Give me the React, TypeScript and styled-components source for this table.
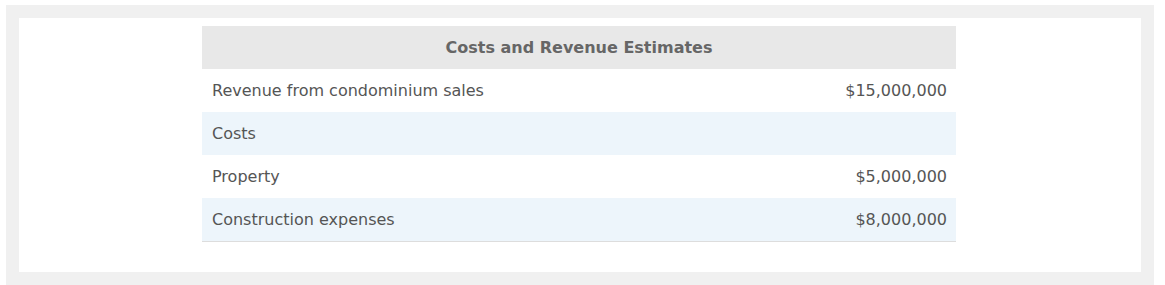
import React from 'react';
import styled, { createGlobalStyle } from 'styled-components';

const GlobalStyle = createGlobalStyle`
  html, body {
    margin: 0;
    padding: 0;
    background: #ffffff;
  }
`;

const rows = [
  { label: 'Revenue from condominium sales', amount: '$15,000,000' },
  { label: 'Costs', amount: '' },
  { label: 'Property', amount: '$5,000,000' },
  { label: 'Construction expenses', amount: '$8,000,000' },
];

function App() {
  return (
    <>
      <GlobalStyle />
      <Frame>
        <Panel>
          <Table>
            <thead>
              <tr>
                <HeadCell colSpan={2}>Costs and Revenue Estimates</HeadCell>
              </tr>
            </thead>
            <tbody>
              {rows.map((row, i) => (
                <Row key={row.label} $striped={i % 2 === 1}>
                  <Cell>{row.label}</Cell>
                  <Cell className='amount'>{row.amount}</Cell>
                </Row>
              ))}
            </tbody>
          </Table>
        </Panel>
      </Frame>
    </>
  );
}

const Frame = styled.div`
  margin: 5px 11px 0 6px;
  background: #f0f0f0;
  padding: 13px;
  height: 254px;
  box-sizing: content-box;
`;

const Panel = styled.div`
  background: #ffffff;
  height: 100%;
  padding: 8px 2px 0 0;
  box-sizing: border-box;
`;

const Table = styled.table`
  width: 754px;
  margin: 0 auto;
  border-collapse: collapse;
  font-family: 'DejaVu Sans', Verdana, sans-serif;
  font-size: 16px;
  color: #555555;
  border-bottom: 1px solid #dddddd;
`;

const HeadCell = styled.th`
  height: 43px;
  padding: 0 10px;
  background: #e8e8e8;
  color: #666666;
  font-weight: bold;
  text-align: center;
`;

const Row = styled.tr<{ $striped: boolean }>`
  background: ${(p) => (p.$striped ? '#edf5fb' : '#ffffff')};
`;

const Cell = styled.td`
  height: 43px;
  padding: 0 9px 0 10px;
  text-align: left;

  &.amount {
    text-align: right;
  }
`;

export default App;
